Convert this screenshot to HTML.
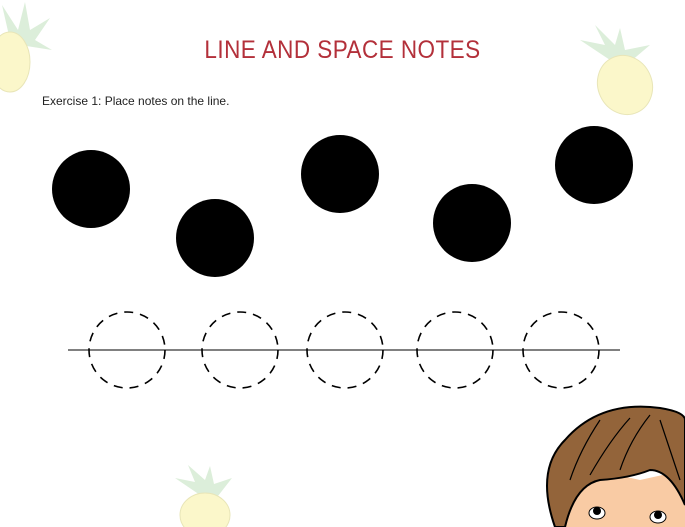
<!DOCTYPE html>
<html><head><style>
body{margin:0;width:685px;height:527px;background:#fff;position:relative;overflow:hidden;font-family:"Liberation Sans",sans-serif}
.t{position:absolute;left:0;width:685px;top:36px;text-align:center;color:#b3303a;font-size:25px;letter-spacing:0.5px;transform:scaleX(0.9)}
.e{position:absolute;left:42px;top:94px;font-size:12px;color:#222}
svg{position:absolute;left:0;top:0}
</style></head><body>
<svg width="685" height="527">
<g opacity="0.9">
<g fill="#d8ecd6"><path d="M10 40 L2 5 L18 30 L25 2 L30 30 L50 18 L35 40 L52 50 L20 45Z"/></g>
<ellipse cx="10" cy="62" rx="20" ry="30" fill="#fbf7c4" stroke="#e6e3b0"/>
<g fill="#d8ecd6"><path d="M610 60 L580 40 L605 45 L595 25 L615 45 L620 28 L625 50 L650 45 L630 62Z"/></g>
<ellipse cx="625" cy="85" rx="27" ry="30" fill="#fbf7c4" stroke="#e6e3b0" transform="rotate(-25 625 85)"/>
<g fill="#d8ecd6"><path d="M200 495 L175 478 L195 482 L188 465 L205 480 L210 466 L214 484 L232 478 L218 496Z"/></g>
<ellipse cx="205" cy="515" rx="25" ry="22" fill="#fbf7c4" stroke="#e6e3b0"/>
</g>
<g fill="#000">
<circle cx="91" cy="189" r="39"/><circle cx="215" cy="238" r="39"/><circle cx="340" cy="174" r="39"/><circle cx="472" cy="223" r="39"/><circle cx="594" cy="165" r="39"/>
</g>
<line x1="68" y1="350" x2="620" y2="350" stroke="#000" stroke-width="1"/>
<g fill="none" stroke="#000" stroke-width="1.6" stroke-dasharray="9 7">
<circle cx="127" cy="350" r="38"/><circle cx="240" cy="350" r="38"/><circle cx="345" cy="350" r="38"/><circle cx="455" cy="350" r="38"/><circle cx="561" cy="350" r="38"/>
</g>
<path d="M560 527 L560 480 Q600 470 640 480 L685 470 L685 527Z" fill="#f9cba4"/>
<path d="M555 527 Q535 470 565 440 Q600 400 660 408 Q685 412 685 420 L685 505 Q670 470 650 470 Q630 478 600 480 Q575 485 565 527Z" fill="#93643a" stroke="#000" stroke-width="2"/>
<g stroke="#000" stroke-width="1.2" fill="none"><path d="M600 420 Q580 450 570 480"/><path d="M650 415 Q630 440 620 470"/><path d="M630 418 Q610 440 590 475"/><path d="M660 420 Q670 450 680 480"/></g>
<ellipse cx="597" cy="513" rx="8" ry="6" fill="#fff" stroke="#000"/><circle cx="597" cy="511" r="4"/>
<ellipse cx="658" cy="517" rx="8" ry="6" fill="#fff" stroke="#000"/><circle cx="658" cy="515" r="4"/>
</svg>
<div class="t">LINE AND SPACE NOTES</div>
<div class="e">Exercise 1: Place notes on the line.</div>
</body></html>
